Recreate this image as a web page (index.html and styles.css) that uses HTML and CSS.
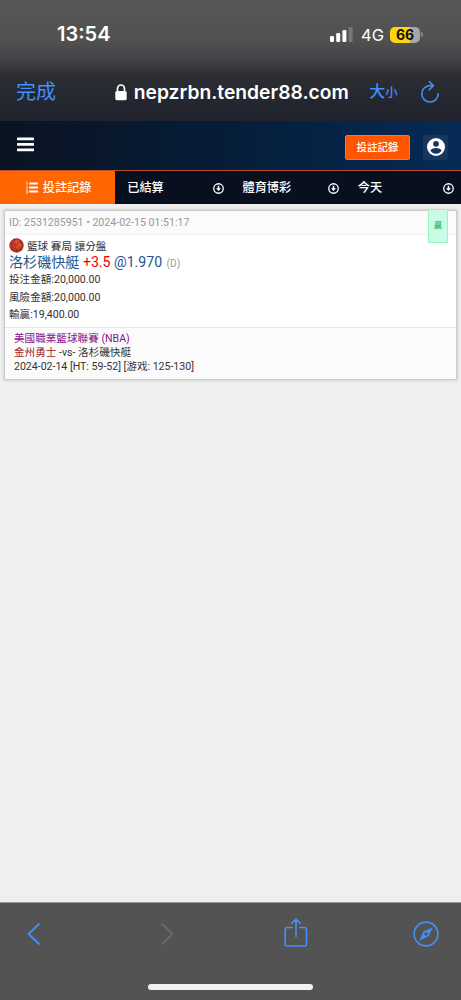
FILE: index.html
```
<!DOCTYPE html>
<html lang="zh-Hant">
<head>
<meta charset="utf-8">
<meta name="viewport" content="width=device-width, initial-scale=1">
<title>投註記錄</title>
<link rel="stylesheet" href="styles.css">
</head>
<body>
<div class="phone">
  <header class="browser-top">
    <div class="status">
      <span class="clock">13:54</span>
      <div class="indicators">
        <svg class="signal" width="23" height="15" viewBox="0 0 23 15"><rect x="0" y="9" width="4" height="6" rx="1.2" fill="#fff"/><rect x="6.2" y="6" width="4" height="9" rx="1.2" fill="#fff"/><rect x="12.4" y="3" width="4" height="12" rx="1.2" fill="#fff"/><rect x="18.6" y="0" width="4" height="15" rx="1.2" fill="#777"/></svg>
        <span class="network">4G</span>
        <span class="battery">66</span>
        <span class="battery-tip"></span>
      </div>
    </div>
    <div class="address">
      <span class="done">完成</span>
      <svg class="lock" width="12" height="17" viewBox="0 0 12 17"><path d="M2.5 8V4.8a3.5 3.8 0 0 1 7 0V8" fill="none" stroke="#fff" stroke-width="1.7"/><rect x="0.3" y="7" width="11.4" height="9.2" rx="1.6" fill="#fff"/></svg>
      <span class="url">nepzrbn.tender88.com</span>
      <span class="text-size">大<small>小</small></span>
      <svg class="reload" width="20" height="24" viewBox="0 0 20 24" fill="none" stroke="#438ffb" stroke-width="1.6" stroke-linecap="round" stroke-linejoin="round"><path d="M13 5.6H10a8.2 8.2 0 1 0 8.2 8.2"/><path d="M9.2 1.5l4.2 4.1-4.2 4.2"/></svg>
    </div>
  </header>

  <div class="site-bar">
    <svg class="menu" width="17" height="15" viewBox="0 0 17 15" fill="#fff"><rect y="0.4" width="17" height="2.8" rx=".5"/><rect y="6" width="17" height="2.8" rx=".5"/><rect y="11.5" width="17" height="2.8" rx=".5"/></svg>
    <span class="record-button">投註記錄</span>
    <span class="profile"><svg width="18" height="18" viewBox="0 0 18 18"><circle cx="9" cy="9" r="9" fill="#fff"/><circle cx="9" cy="5.8" r="2.9" fill="#17365f"/><path d="M3.4 12.5C4.5 10.8 7 10.1 9 10.1s4.500.7 5.600 2.400C13.300 14.600 11.300 15.700 9 15.700s-4.300-1.100-5.600-3.200z" fill="#17365f"/></svg></span>
  </div>

  <nav class="tabs">
    <div class="tab active"><svg width="12" height="13" viewBox="0 0 12 13" fill="none" stroke="#fff"><path d="M3.200 2.500H12M3.200 6.500H12M3.200 10.500H12" stroke-width="1.800"/><path d="M.2 1h.9v3M.1 5.200h1.200v1L.1 7.600h1.500M.1 9.200h1.300v3H.1M.4 10.700h1" stroke-width=".7"/></svg><span>投註記錄</span></div>
    <div class="tab"><span>已結算</span><svg class="down" width="11" height="11" viewBox="0 0 11 11"><circle cx="5.500" cy="5.500" r="4.750" fill="none" stroke="#fff" stroke-width="1.300"/><path d="M4.700 2.700h1.600v2.600H8L5.500 8 3 5.300h1.700z" fill="#fff"/></svg></div>
    <div class="tab"><span>體育博彩</span><svg class="down" width="11" height="11" viewBox="0 0 11 11"><circle cx="5.500" cy="5.500" r="4.750" fill="none" stroke="#fff" stroke-width="1.300"/><path d="M4.700 2.700h1.600v2.600H8L5.500 8 3 5.300h1.700z" fill="#fff"/></svg></div>
    <div class="tab"><span>今天</span><svg class="down" width="11" height="11" viewBox="0 0 11 11"><circle cx="5.500" cy="5.500" r="4.750" fill="none" stroke="#fff" stroke-width="1.300"/><path d="M4.700 2.700h1.600v2.600H8L5.500 8 3 5.300h1.700z" fill="#fff"/></svg></div>
  </nav>

  <main class="content">
    <article class="bet">
      <div class="bet-id">ID: 2531285951 • 2024-02-15 01:51:17</div>
      <div class="bet-body">
        <div class="sport"><svg width="15" height="15" viewBox="0 0 15 15"><circle cx="7.500" cy="7.500" r="7.200" fill="#b93024"/><circle cx="8" cy="6.500" r="4.500" fill="#d8552f"/><path d="M1 5.500c4-.5 9 2 11.500 7M5.500.8c-.5 5 .5 9 3.500 13.500M13.800 4C9 4 4 7 2.200 12M9.800 1c1 2 2.500 4.500 4.500 6" fill="none" stroke="#74221a" stroke-width=".6"/></svg><span>籃球 賽局 讓分盤</span></div>
        <div class="pick"><span class="team">洛杉磯快艇</span> <span class="line">+3.5</span> <span class="odds">@1.970</span> <span class="format">(D)</span></div>
        <div class="row">投注金額:20,000.00</div>
        <div class="row">風險金額:20,000.00</div>
        <div class="row">輸贏:19,400.00</div>
      </div>
      <div class="match">
        <div class="league">美國職業籃球聯賽 (NBA)</div>
        <div><span class="home">金州勇士</span> -vs- 洛杉磯快艇</div>
        <div class="score">2024-02-14 [HT: 59-52] [游戏: 125-130]</div>
      </div>
      <span class="result">贏</span>
    </article>
  </main>

  <footer class="browser-bottom">
    <div class="tools">
      <svg width="14" height="24" viewBox="0 0 14 24" fill="none" stroke="#438ffb" stroke-width="1.800" stroke-linecap="round" stroke-linejoin="round"><path d="M12 2L1.500 12 12 22"/></svg>
      <svg class="forward" width="14" height="24" viewBox="0 0 14 24" fill="none" stroke="#6a6a6a" stroke-width="1.800" stroke-linecap="round" stroke-linejoin="round"><path d="M2 2l10.500 10L2 22"/></svg>
      <svg class="share" width="24" height="30" viewBox="0 0 24 30" fill="none" stroke="#438ffb" stroke-width="1.600" stroke-linecap="round" stroke-linejoin="round"><path d="M8 9.500H3.200A2 2 0 0 0 1.200 11.500V26a2 2 0 0 0 2 2H20.500a2 2 0 0 0 2-2V11.500a2 2 0 0 0-2-2H16M12 18.500V1.500M7.500 5.500L12 1.200l4.500 4.300"/></svg>
      <svg class="compass" width="26" height="26" viewBox="0 0 26 26"><circle cx="13" cy="13" r="11.900" fill="none" stroke="#438ffb" stroke-width="1.600"/><path d="M19.800 6.400L10.400 10.500 6.400 19.800 15.500 15.300z" fill="#438ffb"/><circle cx="13" cy="13" r="1.700" fill="#535353"/></svg>
    </div>
    <span class="home-indicator"></span>
  </footer>
</div>
</body>
</html>
```
FILE: styles.css
```
* { box-sizing: border-box; }
body { margin: 0; background: #efefef; font-family: Roboto, "Noto Sans CJK TC", sans-serif; }
svg { display: block; flex: none; }
.phone { width: 461px; height: 1000px; display: flex; flex-direction: column; overflow: hidden; background: #efefef; white-space: nowrap; }

.browser-top { height: 121px; flex: none; background: linear-gradient(#575757 0, #515151 40px, #434446 58px, #2c2e33 76px, #252830 96px, #20232d 121px); color: #fff; font-family: Inter, "Noto Sans CJK SC", sans-serif; }
.status { height: 68px; display: flex; justify-content: space-between; padding: 22px 38px 0 57px; }
.clock { font-size: 20px; line-height: 25px; font-weight: 600; }
.indicators { display: flex; height: 25px; align-items: center; }
.network { font-size: 16.500px; margin-left: 8px; width: 22px; }
.battery { margin-left: 7px; width: 30px; height: 16px; border-radius: 5px; background: linear-gradient(90deg, #ffd60a 65%, #a6a6a6 65%); color: #111; font-weight: 700; font-size: 14px; line-height: 16px; text-align: center; }
.battery-tip { width: 2px; height: 5px; margin-left: 1px; border-radius: 0 2px 2px 0; background: #888; }
.address { height: 48px; display: flex; align-items: center; padding: 0 21px 0 16px; }
.done { width: 99px; height: 26px; line-height: 27px; font-size: 20px; color: #438ffb; }
.lock { margin-right: 7px; }
.url { width: 236px; font-size: 19.250px; font-weight: 600; }
.text-size { width: 51px; height: 22px; line-height: 21px; color: #438ffb; font-size: 16px; font-weight: 500; }
.text-size small { font-size: 12.500px; }

.site-bar { height: 50px; flex: none; display: flex; align-items: center; padding: 3px 13px 0 17px; border-bottom: 1px solid #b9502a; background: linear-gradient(90deg, #0a1322 0, #061c36 45%, #052b56 100%); }
.menu { margin: -6px auto 0 0; }
.record-button { width: 65px; height: 25px; border: 1px solid #d98a22; border-radius: 2px; background: #ff5500; color: #fff; font-size: 10.500px; font-weight: 500; line-height: 23px; text-align: center; }
.profile { width: 25px; height: 25px; margin-left: 13px; display: grid; place-items: center; border-radius: 2px; background: #17365f; }

.tabs { height: 33px; flex: none; display: grid; grid-template-columns: repeat(4, 1fr); background: #081020; color: #fff; font-size: 12.200px; font-weight: 500; }
.tab { display: flex; align-items: center; justify-content: space-between; padding: 0 2px 0 12px; }
.tab > span { margin-top: -1px; }
.tab.active { background: #ff6600; justify-content: center; gap: 5px; padding: 0 0 0 2px; }
.tab .down { margin: 1px 5px 0 0; }

.content { flex: 1; padding: 6px 4px; }
.bet { position: relative; height: 170px; border: 1px solid #ccc; background: #fff; box-shadow: 0 0 3px #bbb; color: #333; font-size: 10.600px; }
.bet-id { height: 24px; padding-left: 4px; line-height: 23px; color: #999; background: #fbfbfb; border-bottom: 1px solid #eef0f6; }
.bet-body { height: 93px; padding: 3px 0 0 4px; border-bottom: 1px solid #e3e3f1; }
.sport { height: 15px; display: flex; align-items: center; gap: 3px; }
.sport > span { margin-top: -1px; }
.pick { height: 18px; font-size: 14.100px; line-height: 18px; color: #1b568f; }
.line { color: #f00000; }
.format { color: #999; font-size: 10.200px; margin-left: 1px; }
.row { height: 17.500px; line-height: 18px; }
.match { height: 51px; padding: 4px 0 0 9px; background: #fbfbfb; line-height: 14px; }
.league { color: #8b108b; }
.home { color: #a32020; }
.score { letter-spacing: -.02px; }
.result { position: absolute; top: -2px; right: 8px; width: 20px; height: 34px; border: 1px solid #98f5bd; background: #cafbe5; color: #36bd77; font-size: 8px; font-weight: 700; line-height: 32px; text-align: center; }

.browser-bottom { height: 98px; flex: none; border-top: 1px solid #999; background: #535353; display: flex; flex-direction: column; align-items: center; }
.tools { width: 100%; height: 62px; display: flex; align-items: center; padding: 0 22px 0 27px; }
.forward { margin-left: 119px; }
.share { margin: -2px 0 0 110px; }
.compass { margin-left: auto; }
.home-indicator { width: 165px; height: 6px; margin-top: 19px; border-radius: 3px; background: #f1f1f1; }
```
